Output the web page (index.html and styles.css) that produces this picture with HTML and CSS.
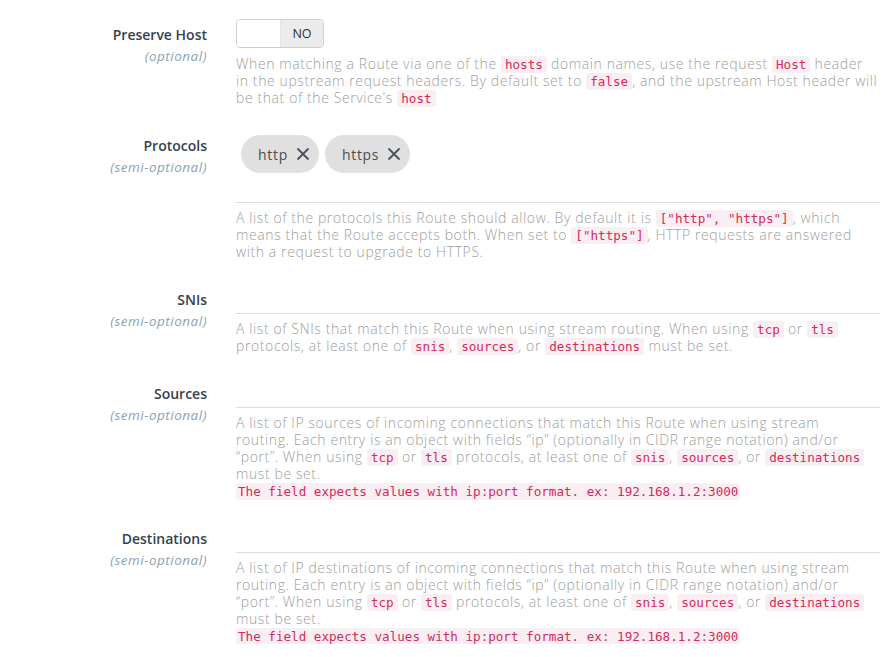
FILE: index.html
```html
<!DOCTYPE html>
<html>
<head>
<meta charset="utf-8">
<link rel="stylesheet" href="styles.css">
</head>
<body>
<div class="form">
  <div class="row">
    <div class="label-col">
      <div class="label">Preserve Host</div>
      <div class="sublabel">(optional)</div>
    </div>
    <div class="field-col">
      <div class="toggle"><span class="toggle-off"></span><span class="toggle-no">NO</span></div>
      <p class="help help-toggle">When matching a Route via one of the <code>hosts</code> domain names, use the request <code>Host</code> header<br>in the upstream request headers. By default set to <code>false</code>, and the upstream Host header will<br>be that of the Service's <code>host</code></p>
    </div>
  </div>

  <div class="row">
    <div class="label-col">
      <div class="label">Protocols</div>
      <div class="sublabel">(semi-optional)</div>
    </div>
    <div class="field-col">
      <div class="tags-input">
        <div class="chips">
          <span class="chip">http <svg class="x" viewBox="0 0 14 14" width="14" height="14"><path d="M1.5 1.5 L12.5 12.5 M12.5 1.5 L1.5 12.5"/></svg></span>
          <span class="chip">https <svg class="x" viewBox="0 0 14 14" width="14" height="14"><path d="M1.5 1.5 L12.5 12.5 M12.5 1.5 L1.5 12.5"/></svg></span>
        </div>
        <div class="line-input"></div>
      </div>
      <p class="help">A list of the protocols this Route should allow. By default it is <code>["http", "https"]</code>, which<br>means that the Route accepts both. When set to <code>["https"]</code>, HTTP requests are answered<br>with a request to upgrade to HTTPS.</p>
    </div>
  </div>

  <div class="row">
    <div class="label-col">
      <div class="label">SNIs</div>
      <div class="sublabel">(semi-optional)</div>
    </div>
    <div class="field-col">
      <div class="line-input"></div>
      <p class="help">A list of SNIs that match this Route when using stream routing. When using <code>tcp</code> or <code>tls</code><br>protocols, at least one of <code>snis</code>, <code>sources</code>, or <code>destinations</code> must be set.</p>
    </div>
  </div>

  <div class="row">
    <div class="label-col">
      <div class="label">Sources</div>
      <div class="sublabel">(semi-optional)</div>
    </div>
    <div class="field-col">
      <div class="line-input"></div>
      <p class="help">A list of IP sources of incoming connections that match this Route when using stream<br>routing. Each entry is an object with fields “ip” (optionally in CIDR range notation) and/or<br>“port”. When using <code>tcp</code> or <code>tls</code> protocols, at least one of <code>snis</code>, <code>sources</code>, or <code>destinations</code><br>must be set.</p>
      <div class="hint"><code>The field expects values with ip:port format. ex: 192.168.1.2:3000</code></div>
    </div>
  </div>

  <div class="row">
    <div class="label-col">
      <div class="label">Destinations</div>
      <div class="sublabel">(semi-optional)</div>
    </div>
    <div class="field-col">
      <div class="line-input"></div>
      <p class="help">A list of IP destinations of incoming connections that match this Route when using stream<br>routing. Each entry is an object with fields “ip” (optionally in CIDR range notation) and/or<br>“port”. When using <code>tcp</code> or <code>tls</code> protocols, at least one of <code>snis</code>, <code>sources</code>, or <code>destinations</code><br>must be set.</p>
      <div class="hint"><code>The field expects values with ip:port format. ex: 192.168.1.2:3000</code></div>
    </div>
  </div>
</div>
</body>
</html>
```

FILE: styles.css
```css
html, body {
  margin: 0;
  padding: 0;
  background: #ffffff;
  overflow: hidden;
}

body {
  padding: 19px 10px 0 8px;
  font-family: "Open Sans", "Liberation Sans", sans-serif;
}

.form {
  display: flex;
  flex-direction: column;
  gap: 24px;
}

.row {
  display: grid;
  grid-template-columns: 199px 644px;
  column-gap: 29px;
}

.label-col {
  text-align: right;
  padding-top: 6px;
}

.label {
  font-size: 14px;
  line-height: 20px;
  letter-spacing: 0;
  color: #36424f;
  font-weight: 600;
}

.sublabel {
  font-size: 13.5px;
  line-height: 20px;
  letter-spacing: 0.5px;
  font-style: italic;
  color: #8ca2b3;
  margin-top: 1px;
}

.field-col {
  min-width: 0;
}

.toggle {
  display: flex;
  width: 86px;
  height: 27px;
  border: 1px solid #cfcfcf;
  border-radius: 4px;
  overflow: hidden;
}

.toggle-off {
  width: 43px;
  background: #ffffff;
}

.toggle-no {
  flex: 1;
  background: #ebebeb;
  border-left: 1px solid #e2e2e2;
  font-size: 12.5px;
  color: #2b2b2b;
  display: flex;
  align-items: center;
  justify-content: center;
}

.help {
  margin: 6px 0 0;
  font-size: 14px;
  line-height: 17px;
  letter-spacing: 0.6px;
  white-space: nowrap;
  color: #9d9d9d;
  font-weight: 300;
}

.help-toggle {
  margin-top: 7px;
}

code {
  font-family: "DejaVu Sans Mono", monospace;
  font-size: 12.6px;
  line-height: 1;
  letter-spacing: 0;
  color: #d52a5a;
  background: #f9eff2;
  border-radius: 3px;
  padding: 1px 4px;
}

.hint {
  line-height: 17px;
}

.hint code {
  padding: 1px 2px;
}

.tags-input {
  display: flex;
  flex-direction: column;
}

.chips {
  display: flex;
  gap: 6px;
  padding: 5px 0 0 5px;
}

.chip {
  display: inline-flex;
  align-items: center;
  gap: 8px;
  height: 38px;
  padding: 0 9px 0 17px;
  border-radius: 19px;
  background: #e0e0e0;
  font-size: 14px;
  letter-spacing: 0.7px;
  color: #4c4c4c;
}

.chip .x {
  fill: none;
  stroke: #46525c;
  stroke-width: 1.8;
}

.line-input {
  height: 29px;
  border-bottom: 1px solid #dddddd;
}
```
